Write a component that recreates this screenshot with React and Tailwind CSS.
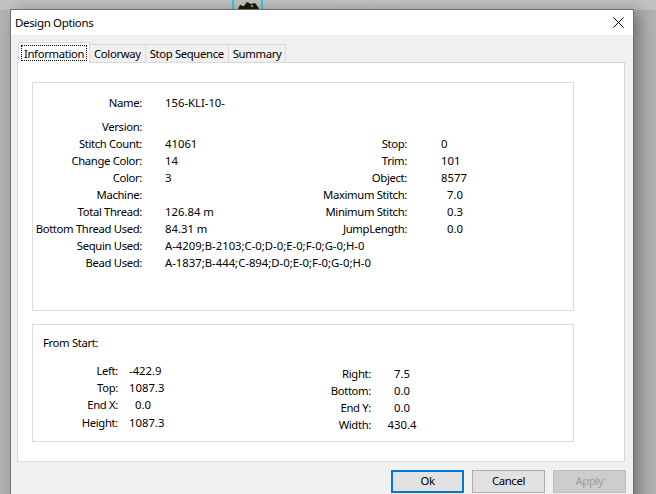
import React from "react";

const FONT = "font-['Noto_Sans','DejaVu_Sans',sans-serif]";
const LBL = "tracking-[-0.35px]";

const mainRows = [
  { label: "Stitch Count:", value: "41061", label2: "Stop:", value2: "0", pad2: "pl-0" },
  { label: "Change Color:", value: "14", label2: "Trim:", value2: "101", pad2: "pl-0" },
  { label: "Color:", value: "3", label2: "Object:", value2: "8577", pad2: "pl-0" },
  { label: "Machine:", value: "", label2: "Maximum Stitch:", value2: "7.0", pad2: "pl-[6px]" },
  { label: "Total Thread:", value: "126.84 m", label2: "Minimum Stitch:", value2: "0.3", pad2: "pl-[6px]" },
  { label: "Bottom Thread Used:", value: "84.31 m", label2: "JumpLength:", value2: "0.0", pad2: "pl-[6px]" },
];

const leftStart = [
  { label: "Left:", value: "-422.9", pad: "pl-0" },
  { label: "Top:", value: "1087.3", pad: "pl-0" },
  { label: "End X:", value: "0.0", pad: "pl-[6px]" },
  { label: "Height:", value: "1087.3", pad: "pl-0" },
];

const rightStart = [
  { label: "Right:", value: "7.5" },
  { label: "Bottom:", value: "0.0" },
  { label: "End Y:", value: "0.0" },
  { label: "Width:", value: "430.4" },
];

function Tab({ label, active }) {
  if (active) {
    return (
      <div className={`relative z-10 -mb-px ml-px h-[21px] bg-white border border-b-0 border-[#d9d9d9] px-[2px] pt-[2px] ${LBL}`}>
        <div className="h-[16px] px-[2px] leading-[15px] border border-dotted border-black">{label}</div>
      </div>
    );
  }
  return (
    <div className={`mt-[2px] h-[18px] -ml-px border border-b-0 border-[#d9d9d9] bg-[#f0f0f0] px-[4px] leading-[17px] ${LBL}`}>
      {label}
    </div>
  );
}

function Button({ children, variant }) {
  const styles =
    variant === "default"
      ? "border-2 border-[#0078d7] bg-[#e1e1e1] text-black"
      : variant === "disabled"
      ? "border border-[#bfbfbf] bg-[#cccccc] text-[#a0a0a0]"
      : "border border-[#adadad] bg-[#e1e1e1] text-black";
  return (
    <div className={`w-[73px] h-[23px] flex items-center justify-center ${LBL} ${styles}`}>
      {children}
    </div>
  );
}

export default function App() {
  return (
    <div className={`relative w-[656px] h-[494px] overflow-hidden bg-[#b2b2b2] ${FONT} text-[11.3px] text-black flex items-start pl-[10px] pt-[9px]`}>
      {/* desktop bits peeking above the dialog */}
      <svg className="absolute left-0 top-0" width="656" height="10" viewBox="0 0 656 10">
        <rect x="0" y="0" width="656" height="10" fill="#c2c2c2" />
        <rect x="232" y="0" width="2" height="9" fill="#2fd0d8" />
        <rect x="261" y="0" width="2" height="9" fill="#2fd0d8" />
        <path d="M238 9 L240 5 L244 6 L247 2 L251 4 L255 3 L258 7 L259 9 Z" fill="#1a1a10" />
        <circle cx="243" cy="5" r="1" fill="#d8d84a" />
        <circle cx="252" cy="6" r="1" fill="#d8d84a" />
        <line x1="328" y1="0" x2="328" y2="9" stroke="#e4e45a" strokeDasharray="1 2" />
        <line x1="398" y1="0" x2="398" y2="9" stroke="#e4e45a" strokeDasharray="1 2" />
        <line x1="340" y1="2" x2="392" y2="2" stroke="#e4e45a" strokeDasharray="1 8" />
      </svg>

      {/* dialog window */}
      <div className="relative w-[624px] h-[520px] shrink-0 flex flex-col border border-[#707070] bg-[#f0f0f0] shadow-[6px_2px_14px_rgba(0,0,0,0.35)]">
        {/* title bar */}
        <div className="h-[25px] bg-white flex items-center justify-between pl-[4px] pr-[9px]">
          <span className={`text-[11.5px] leading-none ${LBL}`}>Design Options</span>
          <svg width="11" height="11" viewBox="0 0 11 11">
            <path d="M0.5 0.5 L10.5 10.5 M10.5 0.5 L0.5 10.5" stroke="#000" strokeWidth="1" />
          </svg>
        </div>

        {/* body */}
        <div className="flex flex-col pl-[6px] pr-[8px] pt-[7px]">
          {/* tabs */}
          <div className="flex items-start">
            <Tab label="Information" active />
            <Tab label="Colorway" />
            <Tab label="Stop Sequence" />
            <Tab label="Summary" />
          </div>

          {/* tab panel */}
          <div className="h-[400px] w-[608px] bg-white border border-[#d9d9d9] pl-[14px] pt-[19px] flex flex-col gap-[13px]">
            {/* main group */}
            <div className="w-[542px] h-[229px] border border-[#dcdcdc] pt-[11px] flex flex-col">
              <div className="flex h-[17px] leading-[17px]">
                <span className={`w-[109px] text-right ${LBL}`}>Name:</span>
                <span className="ml-[23px]">156-KLI-10-</span>
              </div>
              <div className="flex h-[17px] leading-[17px] mt-[7px]">
                <span className={`w-[109px] text-right ${LBL}`}>Version:</span>
              </div>
              {mainRows.map((r) => (
                <div key={r.label} className="flex h-[17px] leading-[17px]">
                  <span className={`w-[109px] text-right whitespace-nowrap ${LBL}`}>{r.label}</span>
                  <span className="ml-[23px] w-[135px]">{r.value}</span>
                  <span className={`w-[107px] text-right whitespace-nowrap ${LBL}`}>{r.label2}</span>
                  <span className={`ml-[34px] ${r.pad2}`}>{r.value2}</span>
                </div>
              ))}
              <div className="flex h-[17px] leading-[17px]">
                <span className={`w-[109px] text-right ${LBL}`}>Sequin Used:</span>
                <span className="ml-[23px] whitespace-nowrap">A-4209;B-2103;C-0;D-0;E-0;F-0;G-0;H-0</span>
              </div>
              <div className="flex h-[17px] leading-[17px]">
                <span className={`w-[109px] text-right ${LBL}`}>Bead Used:</span>
                <span className="ml-[23px] whitespace-nowrap">A-1837;B-444;C-894;D-0;E-0;F-0;G-0;H-0</span>
              </div>
            </div>

            {/* from start group */}
            <div className="w-[542px] h-[118px] border border-[#dcdcdc] flex flex-col">
              <div className={`pl-[10px] pt-[9px] h-[26px] leading-[17px] ${LBL}`}>From Start:</div>
              <div className="flex items-start mt-[11px]">
                <div className="flex flex-col w-[156px]">
                  {leftStart.map((r) => (
                    <div key={r.label} className="flex h-[17px] leading-[17px] last:mt-[1px]">
                      <span className={`w-[85px] text-right ${LBL}`}>{r.label}</span>
                      <span className={`ml-[11px] ${r.pad}`}>{r.value}</span>
                    </div>
                  ))}
                </div>
                <div className="flex flex-col ml-[122px] mt-[3px]">
                  {rightStart.map((r) => (
                    <div key={r.label} className="flex h-[17px] leading-[17px]">
                      <span className={`w-[60px] text-right ${LBL}`}>{r.label}</span>
                      <span className="ml-[13px] w-[36px] text-center">{r.value}</span>
                    </div>
                  ))}
                </div>
              </div>
            </div>
          </div>

          {/* buttons */}
          <div className="flex justify-end gap-[8px] mt-[8px] mr-[-1px]">
            <Button variant="default">Ok</Button>
            <Button>Cancel</Button>
            <Button variant="disabled">Apply</Button>
          </div>
        </div>
      </div>
    </div>
  );
}
